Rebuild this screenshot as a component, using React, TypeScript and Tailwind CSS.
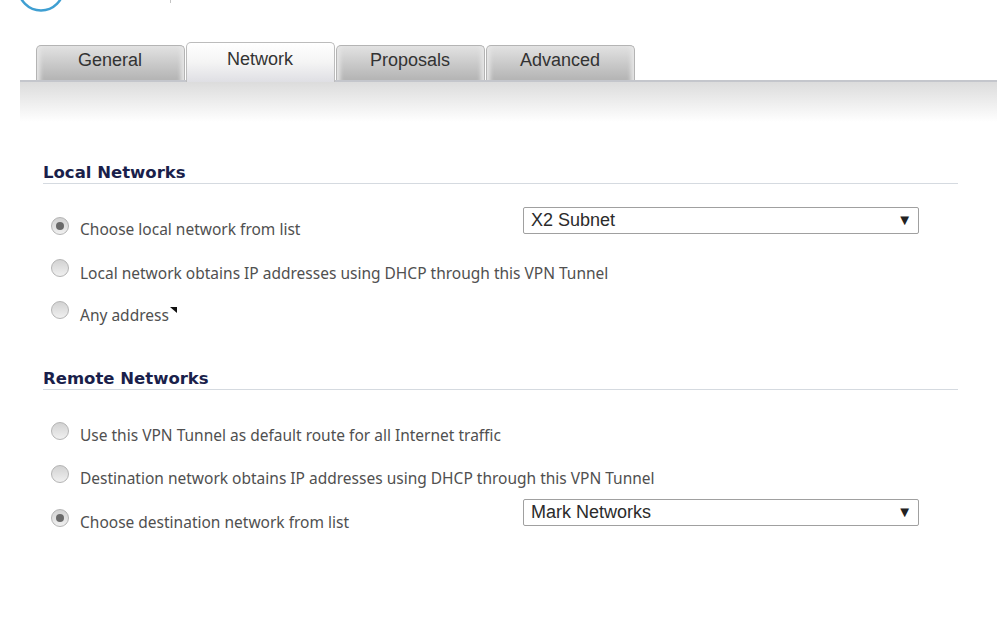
const tabs = ['General', 'Network', 'Proposals', 'Advanced'];

function Radio({ checked }: { checked?: boolean }) {
  return (
    <span className="flex h-[18px] w-[18px] shrink-0 items-center justify-center rounded-full border border-[#b4b4b4] bg-gradient-to-b from-[#d2d2d2] to-[#f0f0f0]">
      {checked && <span className="h-2 w-2 rounded-full bg-[#6a6a6a]" />}
    </span>
  );
}

function Select({ value }: { value: string }) {
  return (
    <div className="absolute left-[523px] top-[-10px] flex h-[27px] w-[396px] items-center justify-between rounded-[2px] border border-[#a0a0a0] bg-white pl-[7px] pr-[6px] font-['Liberation_Sans',sans-serif] text-[18px] text-[#2b2b2b]">
      <span>{value}</span>
      <span className="text-[15px] text-[#222]">▼</span>
    </div>
  );
}

function Row({ label, checked, select, mark, className, textClass = 'mt-[3px]' }: { label: string; checked?: boolean; select?: string; mark?: boolean; className: string; textClass?: string }) {
  return (
    <div className={`relative flex h-[20px] items-start ${className}`}>
      <div className="ml-[51px]">
        <Radio checked={checked} />
      </div>
      <span className={`ml-[11px] whitespace-nowrap font-['Noto_Sans',sans-serif] text-[15.5px] leading-[20px] text-[#505050] ${textClass}`}>{label}</span>
      {mark && <span className="ml-[1px] mt-[6px] h-0 w-0 border-l-[7px] border-t-[6px] border-l-transparent border-t-[#111]" />}
      {select && <Select value={select} />}
    </div>
  );
}

function Heading({ title, className }: { title: string; className: string }) {
  return (
    <div className={`ml-[43px] mr-[39px] border-b border-[#d5dae0] ${className}`}>
      <h2 className="font-['DejaVu_Sans',sans-serif] text-[16.5px] font-bold leading-[20px] text-[#1a1f4b]">{title}</h2>
    </div>
  );
}

export default function App() {
  return (
    <div className="relative h-[643px] w-[997px] overflow-hidden bg-white">
      <div className="h-[42px]">
        <svg width="200" height="14" viewBox="0 0 200 14" fill="none">
          <circle cx="41" cy="-12" r="22.5" stroke="#3f9fd2" strokeWidth="2.5" />
          <rect x="170" y="0" width="1" height="3" fill="#c4c4c4" />
        </svg>
      </div>
      <div className="flex h-[38px] items-start gap-[1px] pl-[36px]">
        {tabs.map((tab) => {
          const active = tab === 'Network';
          return (
            <div
              key={tab}
              className={`flex w-[149px] items-center justify-center rounded-t-[5px] border border-b-0 pr-[1px] font-['Liberation_Sans',sans-serif] text-[18px] text-[#333] ${
                active
                  ? 'relative z-10 h-[40px] border-[#bcbcbc] bg-gradient-to-b from-white via-[#f4f4f4] to-[#dfdfe4] pb-[7px]'
                  : 'mt-[3px] h-[35px] border-[#b4b4b4] bg-gradient-to-b from-[#e2e2e2] to-[#b4b4b4] pb-[5px] shadow-[inset_7px_0_4px_-4px_#e6e6e6,inset_-7px_0_4px_-4px_#e6e6e6]'
              }`}
            >
              {tab}
            </div>
          );
        })}
      </div>
      <div className="ml-[20px] h-[42px] border-t-2 border-[#c4c6cc] bg-gradient-to-b from-[#dcdcdc] to-white" />
      <Heading title="Local Networks" className="mt-[41px]" />
      <Row label="Choose local network from list" checked select="X2 Subnet" className="mt-[33px]" textClass="mt-[2px]" />
      <Row label="Local network obtains IP addresses using DHCP through this VPN Tunnel" className="mt-[22px]" textClass="mt-[4px]" />
      <Row label="Any address" mark className="mt-[22px]" textClass="mt-[4px]" />
      <Heading title="Remote Networks" className="mt-[48px]" />
      <Row label="Use this VPN Tunnel as default route for all Internet traffic" className="mt-[32px]" />
      <Row label="Destination network obtains IP addresses using DHCP through this VPN Tunnel" className="mt-[23px]" />
      <Row label="Choose destination network from list" checked select="Mark Networks" className="mt-[24px]" />
    </div>
  );
}
